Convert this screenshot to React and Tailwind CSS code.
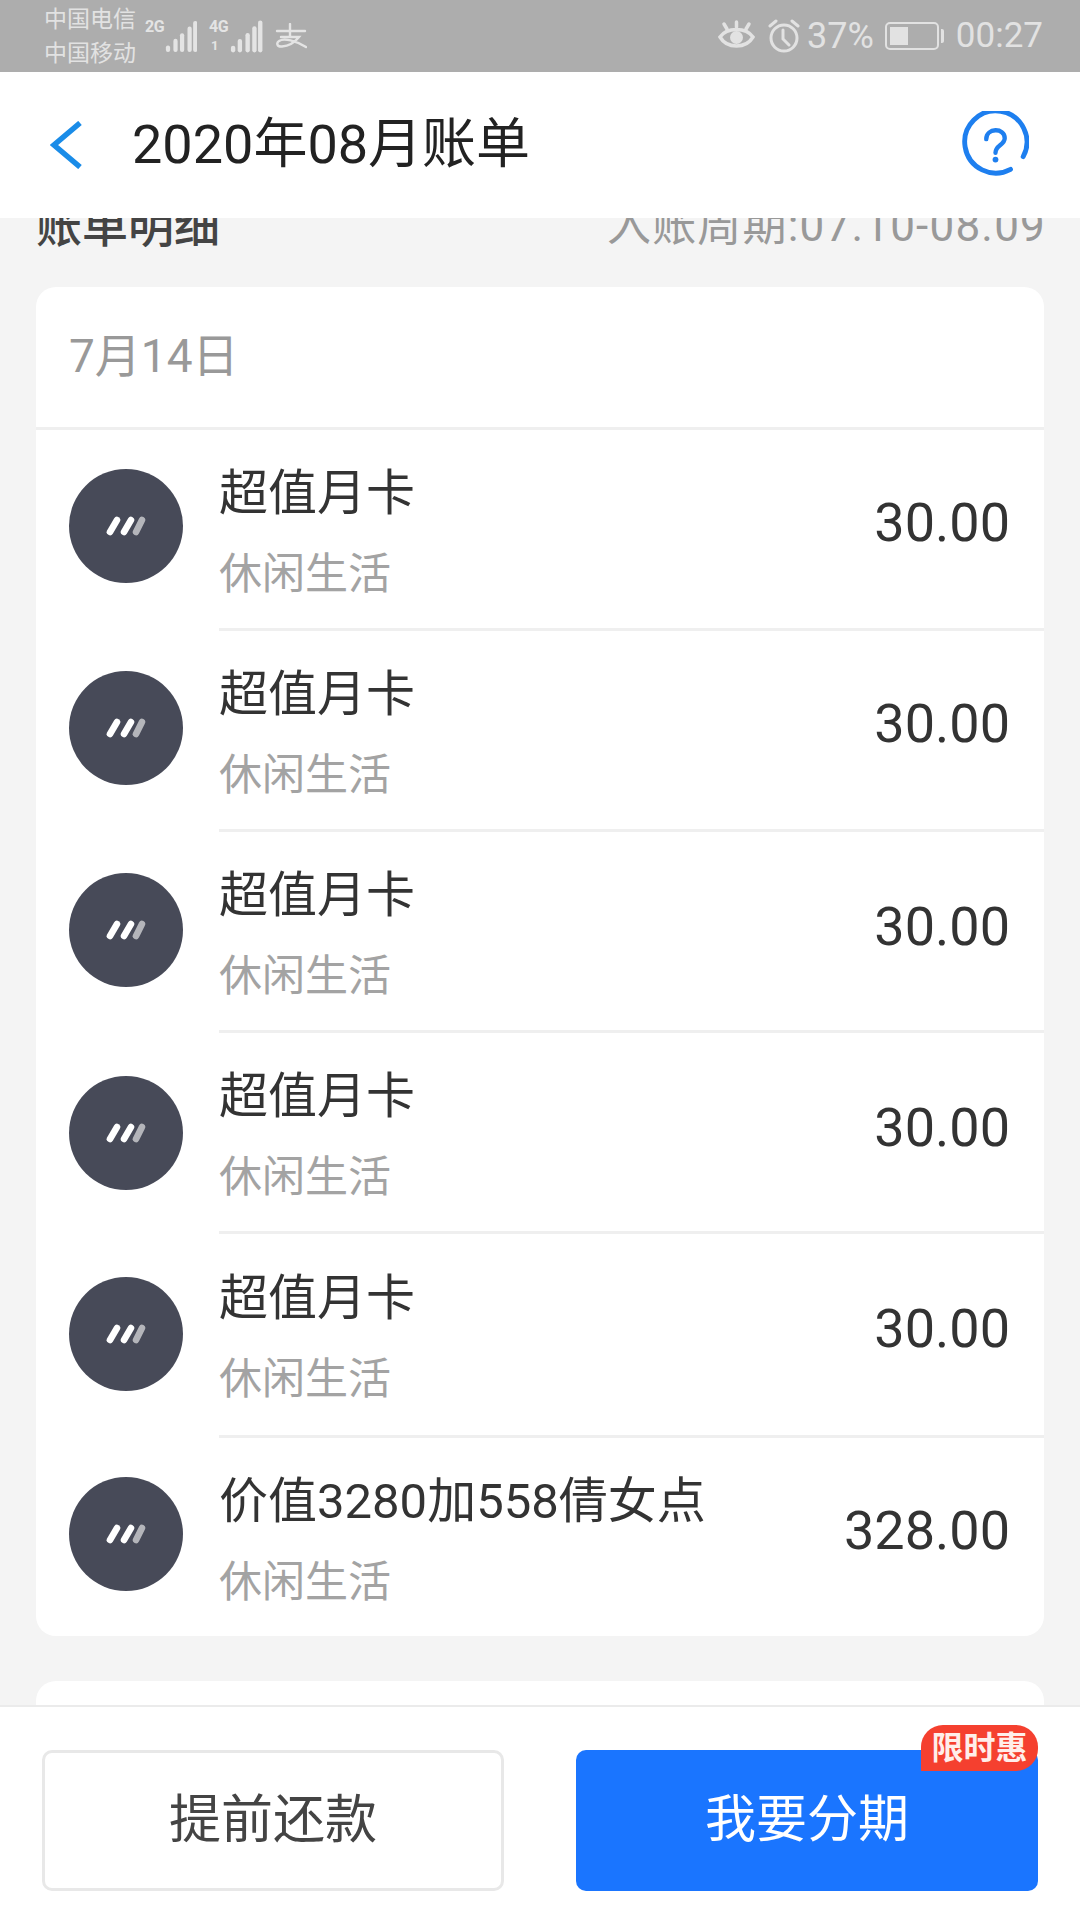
const FONT = "font-['Roboto','Noto_Sans_CJK_SC',sans-serif]";

const rows = [
  { h: "h-[201px]", avatar: "mb-[9px]", amountClass: "mb-[12px]", name: "超值月卡", amount: "30.00" },
  { h: "h-[201px]", avatar: "mb-[7px]", amountClass: "mb-[12px]", name: "超值月卡", amount: "30.00" },
  { h: "h-[201px]", avatar: "mb-[6px]", amountClass: "mb-[8px]", name: "超值月卡", amount: "30.00" },
  { h: "h-[201px]", avatar: "mb-[2px]", amountClass: "mb-[8px]", name: "超值月卡", amount: "30.00" },
  { h: "h-[204px]", avatar: "mb-[5px]", amountClass: "mb-[12px]", name: "超值月卡", amount: "30.00" },
  { h: "h-[198px]", avatar: "mb-[6px]", amountClass: "mb-[12px]", name: "价值3280加558倩女点", amount: "328.00" },
];

function Signal({ label, sub, bars, width }) {
  return (
    <div className="flex items-start h-[34px]">
      <div className="flex flex-col items-start h-[34px] text-[16px] leading-[15px] font-bold text-[#e4e4e4] tracking-[-0.5px]">
        <span>{label}</span>
        {sub && <span className="text-[13px] leading-[12px] mt-[6px] pl-[2px]">{sub}</span>}
      </div>
      <svg width={width} height="34" viewBox={`0 0 ${width} 34`} fill="#e4e4e4">
        {bars.map((b, i) => (
          <rect key={i} x={b[0]} y={34 - b[1]} width="4.5" height={b[1]} rx="2.2" />
        ))}
      </svg>
    </div>
  );
}

function StatusBar() {
  return (
    <div className="h-[72px] shrink-0 bg-[#adadad] flex items-center pl-[44px] pr-[37px] text-[#e2e2e2]">
      <div className="flex flex-col text-[23px] leading-[34px] w-[98px] shrink-0 pt-[2px]">
        <span>中国电信</span>
        <span>中国移动</span>
      </div>
      <div className="ml-[3px] w-[52px]">
        <Signal label="2G" width={35} bars={[[2, 7], [10, 14], [17, 20], [25, 27], [31, 33]]} />
      </div>
      <div className="ml-[12px] w-[54px]">
        <Signal label="4G" sub="1" width={36} bars={[[3, 7], [10, 14], [18, 20], [25, 27], [31, 33]]} />
      </div>
      <svg className="ml-[12px]" width="32" height="26" viewBox="0 0 32 26" fill="none" stroke="#e4e4e4" strokeWidth="2.4" strokeLinecap="round">
        <path d="M2 8 H30" />
        <path d="M15 1 V13" />
        <path d="M6 14 H24 C20 19 14 23 7 23.5 C2 24 1 20 4 18 C9 14.5 21 18 31 24" />
      </svg>
      <div className="flex-1" />
      <svg width="37" height="32" viewBox="0 0 37 32" fill="none" stroke="#e2e2e2" strokeWidth="3.5" strokeLinecap="round">
        <path d="M2 17 C9 7 28 7 35 17 C28 29 9 29 2 17 Z" />
        <circle cx="18.5" cy="17.5" r="6.5" fill="#e2e2e2" stroke="none" />
        <path d="M18.5 2v5M6 4l3 5M31 4l-3 5" />
      </svg>
      <svg className="ml-[12px]" width="34" height="34" viewBox="0 0 34 34" fill="none" stroke="#e2e2e2" strokeWidth="3" strokeLinecap="round">
        <circle cx="17" cy="19" r="13" />
        <path d="M16 11v9l6 6M3 7l6-5M31 7l-6-5" />
      </svg>
      <span className="ml-[6px] text-[36px] leading-[40px]">37%</span>
      <div className="ml-[11px] flex items-center">
        <div className="w-[54px] h-[28px] border-[2px] border-[#e2e2e2] rounded-[5px] p-[3px]">
          <div className="w-[18px] h-full bg-[#e2e2e2]" />
        </div>
        <div className="ml-[2px] w-[3px] h-[14px] bg-[#e2e2e2] rounded-r-[2px]" />
      </div>
      <span className="ml-[12px] text-[35px] leading-[40px]">00:27</span>
    </div>
  );
}

function Header() {
  return (
    <div className="h-[146px] shrink-0 bg-white flex items-center pl-[50px] pr-[51px] relative z-10">
      <svg width="32" height="48" viewBox="0 0 32 48" fill="none" stroke="#1a8ce8" strokeWidth="5.5">
        <path d="M30 2 L4 24 L30 46" />
      </svg>
      <span className="ml-[50px] text-[54px] leading-[60px] text-[#222222] whitespace-nowrap">2020年08月账单</span>
      <div className="flex-1" />
      <svg width="68" height="68" viewBox="0 0 70 70" fill="none" stroke="#1e7fef" strokeWidth="5" strokeLinecap="round">
        <path d="M51 60 A32 32 0 1 1 64 47" />
        <path d="M26 29 C26 17 45 17 45 28 C45 35 35.5 35 35.5 43" strokeWidth="4.5" />
        <circle cx="35.5" cy="50" r="3" fill="#1e7fef" stroke="none" />
      </svg>
    </div>
  );
}

function Avatar({ className }) {
  return (
    <div className={`w-[114px] h-[114px] rounded-full bg-[#474a58] flex items-center justify-center shrink-0 ${className}`}>
      <svg width="40" height="20" viewBox="0 0 40 20" strokeWidth="6.5" strokeLinecap="round">
        <path d="M4 16 L11 4" stroke="#ffffff" />
        <path d="M18 16 L25 4" stroke="#ffffff" />
        <path d="M30 16 L36 4" stroke="#b4b5ba" />
      </svg>
    </div>
  );
}

function Row({ h, avatar, amountClass, name, amount, last }) {
  return (
    <div className={`${h} flex items-center pl-[33px] relative`}>
      <Avatar className={avatar} />
      <div className={`ml-[36px] flex-1 h-full flex items-center pr-[34px] ${last ? "" : "border-b-[3px] border-[#efefef]"}`}>
        <div className="flex-1 flex flex-col pt-[9px]">
          <span className="text-[49px] leading-[60px] text-[#333333] whitespace-nowrap">{name}</span>
          <span className="mt-[20px] text-[43px] leading-[60px] text-[#a3a3a3]">休闲生活</span>
        </div>
        <span className={`text-[54px] leading-[60px] text-[#333333] ${amountClass}`}>{amount}</span>
      </div>
    </div>
  );
}

function Content() {
  return (
    <div className="flex-1 min-h-0 overflow-hidden bg-[#f4f4f4] px-[36px]">
      <div className="h-[69px] flex justify-between items-start">
        <span className="-mt-[22px] text-[46px] leading-[60px] font-medium text-[#444444]">账单明细</span>
        <span className="-mt-[22px] -mr-[2px] text-[44px] leading-[60px] text-[#999999] tracking-[1.2px]">入账周期:07.10-08.09</span>
      </div>
      <div className="bg-white rounded-[20px]">
        <div className="h-[143px] flex items-center pl-[33px] pb-[2px] border-b-[3px] border-[#efefef]">
          <span className="text-[46px] leading-[60px] text-[#999999]">7月14日</span>
        </div>
        {rows.map((r, i) => (
          <Row key={i} {...r} last={i === rows.length - 1} />
        ))}
      </div>
      <div className="mt-[45px] h-[60px] bg-white rounded-t-[20px]" />
    </div>
  );
}

function BottomBar() {
  return (
    <div className="h-[215px] shrink-0 bg-white border-t-[2px] border-[#ebebeb] flex items-start pt-[43px] pl-[42px] pr-[42px] justify-between">
      <button className="w-[462px] h-[141px] rounded-[10px] border-[3px] border-[#e8e8e8] bg-white text-[52px] text-[#444444] flex items-center justify-center">
        提前还款
      </button>
      <div className="relative">
        <button className="w-[462px] h-[141px] rounded-[10px] bg-[#1a75ff] text-[51px] text-white flex items-center justify-center">
          我要分期
        </button>
        <div className="absolute right-0 -top-[25px] w-[117px] h-[46px] bg-[#f5402f] rounded-t-[22px] rounded-br-[22px] flex items-center justify-center text-[32px] font-bold leading-[40px] text-[#ffeeea]">
          限时惠
        </div>
      </div>
    </div>
  );
}

export default function App() {
  return (
    <div className={`w-[1080px] h-[1920px] flex flex-col overflow-hidden bg-white ${FONT}`}>
      <StatusBar />
      <Header />
      <Content />
      <BottomBar />
    </div>
  );
}
